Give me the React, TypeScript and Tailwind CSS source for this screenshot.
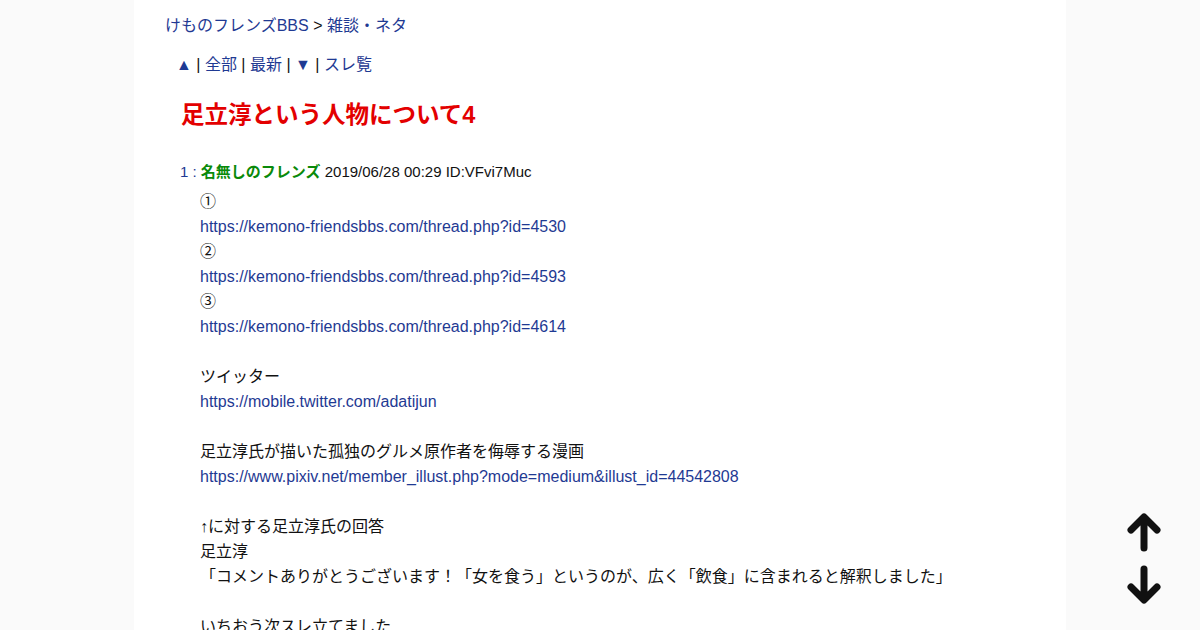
import React from "react";

const LINK = "text-[#1f3a93]";

function ScrollArrows() {
  return (
    <div className="fixed right-[39px] bottom-[26px] flex flex-col items-center gap-[13px]">
      <svg width="34" height="39" viewBox="0 0 34 39" fill="none" stroke="#111" strokeWidth="7" strokeLinecap="round" strokeLinejoin="round">
        <path d="M17 35V5M4 17L17 4l13 13" />
      </svg>
      <svg width="34" height="39" viewBox="0 0 34 39" fill="none" stroke="#111" strokeWidth="7" strokeLinecap="round" strokeLinejoin="round">
        <path d="M17 4v30M4 22l13 13 13-13" />
      </svg>
    </div>
  );
}

export default function App() {
  const body: { text: string; link?: boolean }[] = [
    { text: "①" },
    { text: "https://kemono-friendsbbs.com/thread.php?id=4530", link: true },
    { text: "②" },
    { text: "https://kemono-friendsbbs.com/thread.php?id=4593", link: true },
    { text: "③" },
    { text: "https://kemono-friendsbbs.com/thread.php?id=4614", link: true },
    { text: "" },
    { text: "ツイッター" },
    { text: "https://mobile.twitter.com/adatijun", link: true },
    { text: "" },
    { text: "足立淳氏が描いた孤独のグルメ原作者を侮辱する漫画" },
    { text: "https://www.pixiv.net/member_illust.php?mode=medium&illust_id=44542808", link: true },
    { text: "" },
    { text: "↑に対する足立淳氏の回答" },
    { text: "足立淳" },
    { text: "「コメントありがとうございます！「女を食う」というのが、広く「飲食」に含まれると解釈しました」" },
    { text: "" },
    { text: "いちおう次スレ立てました" },
    { text: "https://kemono-friendsbbs.com/thread.php?id=4703", link: true },
  ];

  return (
    <div className="min-h-screen bg-[#fafafa] text-[#111] font-['Liberation_Sans','Noto_Sans_CJK_JP',sans-serif]">
      <div className="mx-auto w-[932px] bg-white pl-[31px] pt-[15px] pb-10">
        <div className="text-[16px] leading-[22px]">
          <a className={LINK}>けものフレンズBBS</a>
          <span> &gt; </span>
          <a className={LINK}>雑談・ネタ</a>
        </div>

        <div className="mt-[17px] pl-[11px] text-[16px] leading-[22px]">
          <a className={LINK}>▲</a> | <a className={LINK}>全部</a> | <a className={LINK}>最新</a> |{" "}
          <a className={LINK}>▼</a> | <a className={LINK}>スレ覧</a>
        </div>

        <h1 className="mt-[24px] pl-[16px] text-[23.5px] leading-[30px] font-bold text-[#e30000]">
          足立淳という人物について4
        </h1>

        <div className="mt-[32px] pl-[15px]">
          <div className="text-[15px] leading-[20px]">
            <span className={LINK}>1</span>
            <span className={LINK}> : </span>
            <span className="font-bold text-[#0a8a0a]">名無しのフレンズ</span>
            <span> 2019/06/28 00:29 ID:VFvi7Muc</span>
          </div>
          <div className="mt-[7px] pl-[20px] text-[16px] leading-[25px]">
            {body.map((l, i) =>
              l.text === "" ? (
                <div key={i} className="h-[25px]" />
              ) : l.link ? (
                <div key={i}>
                  <a className={LINK}>{l.text}</a>
                </div>
              ) : (
                <div key={i}>{l.text}</div>
              )
            )}
          </div>
        </div>
      </div>
      <ScrollArrows />
    </div>
  );
}
